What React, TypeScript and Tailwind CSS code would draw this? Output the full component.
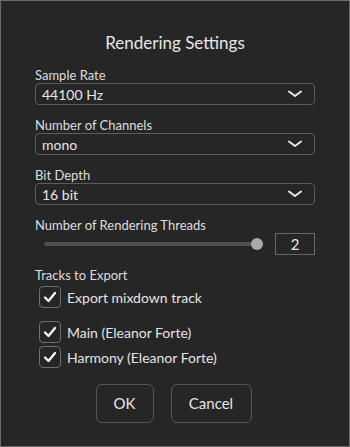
import React from 'react';

const Chevron = () => (
  <svg width="16" height="10" viewBox="0 0 16 10" fill="none">
    <path d="M2 2.5 L8 7 L14 2.5" stroke="#e8e8e8" strokeWidth="2" strokeLinecap="round" strokeLinejoin="round" />
  </svg>
);

const Check = () => (
  <svg width="14" height="14" viewBox="0 0 14 14" fill="none">
    <path d="M2 7.5 L5.5 11 L12 3" stroke="#f2f2f2" strokeWidth="2.4" strokeLinecap="round" strokeLinejoin="round" />
  </svg>
);

function Select({ label, value }: { label: string; value: string }) {
  return (
    <div className="flex flex-col">
      <div className="text-[13px] leading-4 text-[#dedede]">{label}</div>
      <div className="h-[22px] rounded-[4px] border border-[#5c5c5c] flex items-center justify-between pl-[6px] pr-[11px]">
        <span className="text-[14px] text-[#e6e6e6]">{value}</span>
        <Chevron />
      </div>
    </div>
  );
}

function CheckRow({ label }: { label: string }) {
  return (
    <div className="flex items-center gap-[6px] pl-[4px]">
      <div className="w-[22px] h-[22px] rounded-[4px] border border-[#6e6e6e] flex items-center justify-center">
        <Check />
      </div>
      <span className="text-[14px] text-[#e4e4e4]">{label}</span>
    </div>
  );
}

export default function App() {
  return (
    <div
      className="w-[350px] h-[447px] bg-[#262626] border border-[#6a6a6a] flex flex-col px-[34px]"
      style={{ fontFamily: 'Lato, "Noto Sans", sans-serif' }}
    >
      <h1 className="text-center text-[17px] leading-5 text-[#e6e6e6] mt-[32px] mb-[14px]">Rendering Settings</h1>

      <div className="flex flex-col gap-[12px]">
        <Select label="Sample Rate" value="44100 Hz" />
        <Select label="Number of Channels" value="mono" />
        <Select label="Bit Depth" value="16 bit" />

        {/* threads slider */}
        <div className="flex flex-col">
          <div className="text-[13px] leading-4 text-[#dedede]">Number of Rendering Threads</div>
          <div className="h-[22px] flex items-center">
            <div className="flex-1 flex items-center pl-[9px] pr-[6px]">
              <div className="flex-1 h-[4px] rounded-full bg-[#4f4f4f]" />
              <div className="w-[12px] h-[12px] rounded-full bg-[#a9a9a9] -ml-[6px]" />
            </div>
            <div className="w-[40px] h-[22px] border border-[#666] flex items-center justify-center text-[15px] text-[#e6e6e6] ml-[6px]">2</div>
          </div>
        </div>
      </div>

      <div className="text-[13px] leading-4 text-[#dedede] mt-[12px]">Tracks to Export</div>
      <div className="mt-[3px]">
        <CheckRow label="Export mixdown track" />
      </div>
      <div className="flex flex-col gap-[3px] mt-[13px]">
        <CheckRow label="Main (Eleanor Forte)" />
        <CheckRow label="Harmony (Eleanor Forte)" />
      </div>

      <div className="flex justify-center gap-[17px] mt-[16px] pr-[3px]">
        <button className="w-[58px] h-[39px] rounded-[6px] border border-[#555] text-[15px] text-[#e6e6e6]">OK</button>
        <button className="w-[81px] h-[39px] rounded-[6px] border border-[#555] text-[15px] text-[#e6e6e6]">Cancel</button>
      </div>
    </div>
  );
}
